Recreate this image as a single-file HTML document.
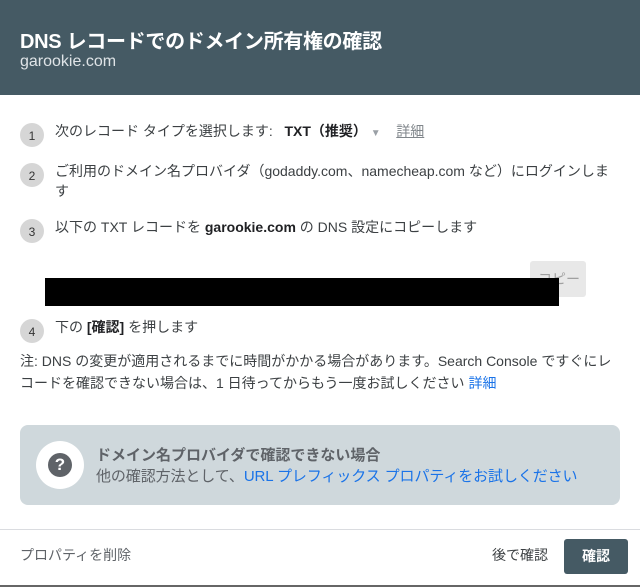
<!DOCTYPE html>
<html><head><meta charset="utf-8"><style>
*{margin:0;padding:0;box-sizing:border-box}
body{width:640px;height:587px;overflow:hidden;background:#fff;font-family:"Liberation Sans","Noto Sans CJK JP",sans-serif;color:#202124;position:relative}
.hd{position:absolute;left:0;top:0;width:640px;height:95px;background:#455a64}
.t{position:absolute;left:20px;top:25px;font-size:20px;font-weight:bold;color:#fff;letter-spacing:-0.3px}
.s{position:absolute;left:20px;top:53px;font-size:16px;color:#dfe4e7}
.c{position:absolute;left:20px;width:24px;height:24px;border-radius:50%;background:#d6d6d6;font-size:12px;color:#333;text-align:center;line-height:26px}
.tx{position:absolute;left:55px;font-size:14px;color:#3c4043;line-height:20px}
.note{position:absolute;left:20px;top:350px;width:598px;font-size:14px;color:#3c4043;line-height:22px}
a{color:#1a73e8;text-decoration:none}
.box{position:absolute;left:20px;top:425px;width:600px;height:80px;background:#cfd8dc;border-radius:8px}
.wc{position:absolute;left:16px;top:16px;width:48px;height:48px;border-radius:50%;background:#fff}
.q{position:absolute;left:12px;top:12px;width:24px;height:24px;border-radius:50%;background:#5f6368;color:#fff;font-weight:bold;font-size:17px;text-align:center;line-height:24px}
.ft{position:absolute;left:0;top:529px;width:640px;height:1px;background:#dadce0}
</style></head><body>
<div class="hd"><div class="t">DNS レコードでのドメイン所有権の確認</div><div class="s">garookie.com</div></div>
<div class="c" style="top:123px">1</div>
<div class="tx" style="top:121px">次のレコード タイプを選択します:&nbsp;&nbsp;&nbsp;<b style="color:#202124">TXT（推奨）</b> <span style="color:#9aa0a6;font-size:10px">▼</span>&nbsp;&nbsp;&nbsp;&nbsp;<span style="color:#80868b;text-decoration:underline">詳細</span></div>
<div class="c" style="top:163px">2</div>
<div class="tx" style="top:161px;width:560px">ご利用のドメイン名プロバイダ（godaddy.com、namecheap.com など）にログインします</div>
<div class="c" style="top:219px">3</div>
<div class="tx" style="top:217px">以下の TXT レコードを <b style="color:#202124">garookie.com</b> の DNS 設定にコピーします</div>
<div style="position:absolute;left:530px;top:261px;width:56px;height:36px;background:#e8e8e8;border-radius:3px;color:#a0a0a0;font-size:14px;padding:8px 0 0 8px">コピー</div>
<div style="position:absolute;left:45px;top:278px;width:514px;height:28px;background:#000"></div>
<div class="c" style="top:319px">4</div>
<div class="tx" style="top:317px">下の <b style="color:#202124">[確認]</b> を押します</div>
<div class="note">注: DNS の変更が適用されるまでに時間がかかる場合があります。Search Console ですぐにレコードを確認できない場合は、1 日待ってからもう一度お試しください <a>詳細</a></div>
<div class="box"><div class="wc"><div class="q">?</div></div>
<div style="position:absolute;left:76px;top:19px;font-size:15px;font-weight:bold;color:#5f6368">ドメイン名プロバイダで確認できない場合</div>
<div style="position:absolute;left:76px;top:40px;font-size:15px;color:#5f6368;letter-spacing:-0.1px">他の確認方法として、<a>URL プレフィックス プロパティをお試しください</a></div></div>
<div class="ft"></div>
<div style="position:absolute;left:20px;top:545px;font-size:14px;color:#5f6368">プロパティを削除</div>
<div style="position:absolute;left:492px;top:545px;font-size:14px;color:#3c4043">後で確認</div>
<div style="position:absolute;left:564px;top:539px;width:64px;height:35px;background:#455a64;border-radius:3px;color:#fff;font-weight:bold;font-size:14px;text-align:center;line-height:35px">確認</div>
<div style="position:absolute;left:0;top:585px;width:640px;height:2px;background:#666"></div>
</body></html>
